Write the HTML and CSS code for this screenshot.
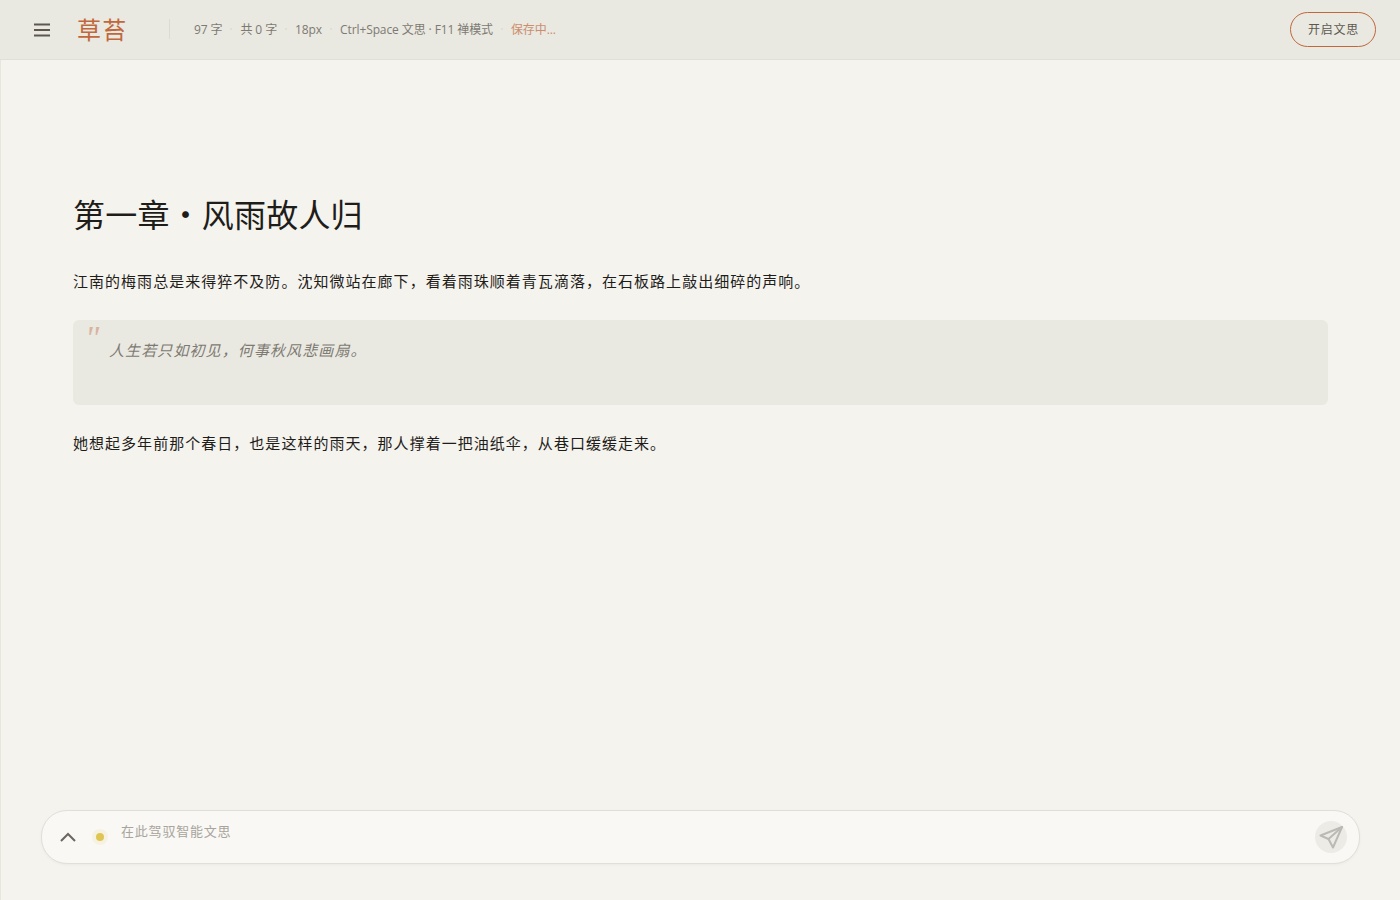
FILE: index.html
```html
<!DOCTYPE html>
<html lang="zh-CN">
<head>
    <meta charset="UTF-8">
    <title>草苔</title>
    <link rel="stylesheet" href="styles.css">
</head>
<body>
    <header class="topbar">
        <button class="menu-btn" aria-label="菜单">
            <svg width="18" height="18" viewBox="0 0 18 18" fill="none" stroke="#5c5850" stroke-width="2">
                <path d="M1 3.500h16M1 9h16M1 14.500h16"/>
            </svg>
        </button>
        <div class="brand">草苔</div>
        <div class="stats">
            <span>97 字</span>
            <i class="dot"></i>
            <span>共 0 字</span>
            <i class="dot"></i>
            <span>18px</span>
            <i class="dot"></i>
            <span>Ctrl+Space 文思 · F11 禅模式</span>
            <i class="dot"></i>
            <span class="saving">保存中...</span>
        </div>
        <button class="muse-btn">开启文思</button>
    </header>

    <main class="editor">
        <h1>第一章・风雨故人归</h1>
        <p>江南的梅雨总是来得猝不及防。沈知微站在廊下，看着雨珠顺着青瓦滴落，在石板路上敲出细碎的声响。</p>
        <blockquote>人生若只如初见，何事秋风悲画扇。</blockquote>
        <p>她想起多年前那个春日，也是这样的雨天，那人撑着一把油纸伞，从巷口缓缓走来。</p>
    </main>

    <div class="composer">
        <button class="expand-btn" aria-label="展开">
            <svg width="16" height="10" viewBox="0 0 16 10" fill="none" stroke="#6b675f" stroke-width="2">
                <path d="M1 9l7-7 7 7"/>
            </svg>
        </button>
        <span class="status-dot"></span>
        <div class="placeholder">在此驾驭智能文思</div>
        <button class="send-btn" aria-label="发送">
            <svg width="24" height="24" viewBox="0 0 24 24" fill="none" stroke="#bcbab4" stroke-width="2" stroke-linejoin="round" stroke-linecap="round">
                <path d="M23 2L1.500 10.500 9.500 14 14 22.500z"/>
                <path d="M23 2L9.500 14"/>
            </svg>
        </button>
    </div>
</body>
</html>
```
FILE: styles.css
```css
* {
    box-sizing: border-box;
}
body {
    margin: 0;
    height: 900px;
    overflow: hidden;
    background: #f4f3ee;
    color: #1f1d1a;
    font-family: "Noto Sans CJK SC", "Noto Sans", sans-serif;
    display: flex;
    flex-direction: column;
}
button {
    border: none;
    background: none;
    padding: 0;
    font-family: inherit;
    cursor: pointer;
}
.topbar {
    height: 60px;
    flex-shrink: 0;
    display: flex;
    align-items: center;
    padding: 0 24px 0 33px;
    background: #e9e8e1;
    border-bottom: 1px solid #e0dfd8;
}
.menu-btn {
    display: flex;
    width: 18px;
    height: 18px;
}
.brand {
    margin: -2px 0 0 26px;
    width: 92px;
    font-size: 24px;
    line-height: 32px;
    letter-spacing: 1.2px;
    color: #c0673c;
}
.stats {
    flex: 1;
    display: flex;
    align-items: center;
    height: 20px;
    margin-top: -1px;
    padding-left: 24px;
    border-left: 1px solid #dcdbd3;
    font-family: "Open Sans", "Noto Sans CJK SC", sans-serif;
    font-size: 12px;
    letter-spacing: -0.1px;
    color: #7d7a72;
}
.dot {
    width: 2px;
    height: 2px;
    margin: 0 8px;
    border-radius: 50%;
    background: #dcdbd3;
}
.saving {
    color: #c0673c;
    opacity: 0.7;
}
.muse-btn {
    width: 86px;
    height: 35px;
    padding: 0 0 2px 1px;
    border: 1px solid #c0673c;
    border-radius: 18px;
    font-size: 12px;
    letter-spacing: 0.8px;
    color: #5c5850;
}
.editor {
    flex: 1;
    padding: 128px 72px 0;
    border-left: 1px solid #e6e5de;
}
h1 {
    margin: 0 0 29px;
    font-size: 32px;
    line-height: 50px;
    font-weight: 400;
    letter-spacing: 0.2px;
}
p {
    margin: 0;
    font-size: 15px;
    line-height: 27px;
    letter-spacing: 1.03px;
}
blockquote {
    position: relative;
    height: 85px;
    margin: 26px 0 24px;
    padding: 16px 36px;
    background: #e9e8e1;
    border-radius: 6px;
    font-size: 15px;
    line-height: 27px;
    letter-spacing: 1.1px;
    font-style: italic;
    color: #7d7a72;
}
blockquote::before {
    content: '"';
    position: absolute;
    left: 12px;
    top: 2px;
    font-family: "Liberation Serif", serif;
    font-size: 34px;
    line-height: 32px;
    color: #c0673c;
    opacity: 0.4;
}
.composer {
    position: absolute;
    left: 41px;
    right: 40px;
    bottom: 36px;
    height: 54px;
    display: flex;
    align-items: center;
    padding: 0 12px 0 18px;
    background: #f9f8f4;
    border: 1px solid #e0dfd8;
    border-radius: 26px;
    box-shadow: 0 1px 3px rgba(0, 0, 0, 0.04);
}
.expand-btn {
    display: flex;
    width: 16px;
    height: 10px;
}
.status-dot {
    width: 8px;
    height: 8px;
    margin-left: 20px;
    border-radius: 50%;
    background: #e0c552;
    box-shadow: 0 0 0 4px rgba(224, 197, 82, 0.1);
}
.placeholder {
    flex: 1;
    margin: -14px 0 0 17px;
    font-size: 13px;
    letter-spacing: 0.8px;
    color: #a8a59d;
}
.send-btn {
    width: 32px;
    height: 32px;
    display: flex;
    align-items: center;
    justify-content: center;
    border-radius: 50%;
    background: #ecebe6;
}
```
